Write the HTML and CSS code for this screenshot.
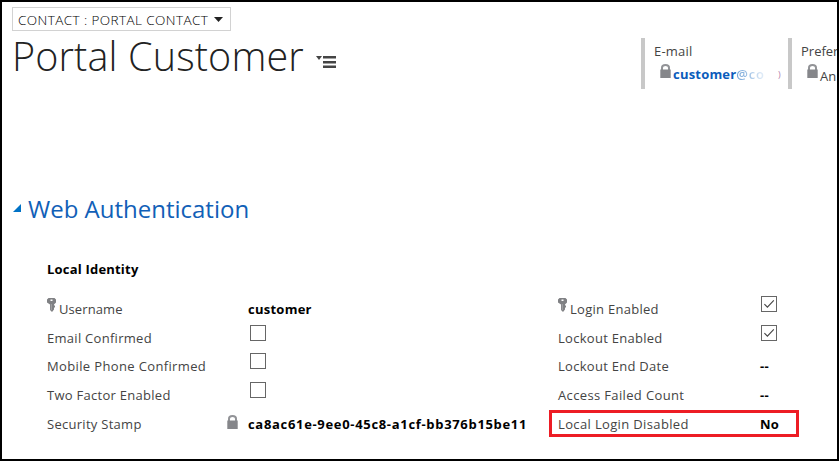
FILE: index.html
```
<!DOCTYPE html>
<html lang="en">
<head>
<meta charset="utf-8">
<title>Portal Customer</title>
<link rel="stylesheet" href="styles.css">
</head>
<body>
<svg class="symbols" aria-hidden="true">
  <symbol id="lock" viewBox="0 0 11 14"><path d="M2 7V3.7Q2 1 5.5 1T9 3.7V7" fill="none" stroke="#929397" stroke-width="2"/><path d="M0.3 5.5h10.4V14H.3z" fill="#85868a"/></symbol>
  <symbol id="key" viewBox="0 0 9 14"><path fill-rule="evenodd" d="M1.5 0h6L9 1.5v3L7 6.5v1h1v2H7v2L5 14 3 12V6.5L0 4.5v-3zM3.5 1.5v1.6h2V1.5z" fill="#808184"/><path d="M4.3 6v6" stroke="#b5b6b8" stroke-width=".7"/></symbol>
  <symbol id="check" viewBox="0 0 14 14"><path d="M2.4 7.2 5.4 10.2 11.8 3.4" fill="none" stroke="#444" stroke-width="1.1"/></symbol>
</svg>
<div class="page">
  <header class="header">
    <div class="heading">
      <div class="form-picker"><span>CONTACT : PORTAL CONTACT</span><svg class="caret" viewBox="0 0 9 5"><path d="M0 0h9L4.5 5z"/></svg></div>
      <div class="title-row">
        <h1 class="title">Portal Customer</h1>
        <svg class="menu" viewBox="0 0 20 13"><path d="M0 0h6L3 4zM7 0h13v2.4H7zM7 5h13v2.4H7zM7 9.6h13V12H7z"/></svg>
      </div>
    </div>
    <div class="summary email">
      <div class="summary-label">E-mail</div>
      <div class="summary-value"><svg class="lock"><use href="#lock"/></svg><span class="address">customer<span class="domain">@co</span></span><span class="remnant">)</span></div>
    </div>
    <div class="summary preferred">
      <div class="summary-label">Prefer</div>
      <div class="summary-value"><svg class="lock"><use href="#lock"/></svg><span class="plain">An</span></div>
    </div>
  </header>
  <h2 class="section"><svg class="twisty" viewBox="0 0 8 8"><path d="M8 0v8H0z"/></svg><span>Web Authentication</span></h2>
  <h3 class="group">Local Identity</h3>
  <div class="columns">
    <div class="col left">
      <div class="row"><div class="label user"><svg class="key"><use href="#key"/></svg><span>Username</span></div><div class="value">customer</div></div>
      <div class="row"><div class="label">Email Confirmed</div><div class="box"></div></div>
      <div class="row"><div class="label wide">Mobile Phone Confirmed</div><div class="box"></div></div>
      <div class="row"><div class="label">Two Factor Enabled</div><div class="box"></div></div>
      <div class="row"><div class="label stamp"><span>Security Stamp</span><svg class="lock"><use href="#lock"/></svg></div><div class="value guid">ca8ac61e-9ee0-45c8-a1cf-bb376b15be11</div></div>
    </div>
    <div class="col right">
      <div class="row"><div class="label"><svg class="key"><use href="#key"/></svg><span>Login Enabled</span></div><div class="box"><svg><use href="#check"/></svg></div></div>
      <div class="row"><div class="label">Lockout Enabled</div><div class="box"><svg><use href="#check"/></svg></div></div>
      <div class="row"><div class="label">Lockout End Date</div><div class="value">--</div></div>
      <div class="row"><div class="label wide">Access Failed Count</div><div class="value">--</div></div>
      <div class="row marked"><div class="label wide">Local Login Disabled</div><div class="value">No</div></div>
    </div>
  </div>
</div>
</body>
</html>
```
FILE: styles.css
```
* { box-sizing: border-box; }
body { margin: 0; font-family: "Open Sans", "Noto Sans", sans-serif; font-size: 13px; color: #444; background: #fff; }
h1, h2, h3 { margin: 0; font-weight: 400; }
svg { display: block; flex: none; }
.symbols { position: absolute; width: 0; height: 0; }
.page { width: 839px; height: 461px; border: 2px solid #000; overflow: hidden; white-space: nowrap; }
.header { display: flex; height: 182px; }
.heading { width: 639px; padding: 5px 0 0 10px; flex: none; }
.form-picker { width: 219px; height: 24px; border: 1px solid #d2d2d2; padding-left: 5px; display: flex; align-items: center; color: #000; font-size: 13.5px; font-weight: 300; letter-spacing: .42px; }
.form-picker span { width: 196px; padding-top: 2px; }
.caret { width: 9px; height: 5px; fill: #222; }
.title-row { display: flex; }
.title { width: 304px; font-size: 39.5px; font-weight: 300; line-height: 50px; color: #222; letter-spacing: .15px; }
.menu { width: 20px; height: 13px; margin-top: 25px; fill: #444; }
.summary { flex: none; width: 147px; height: 51px; margin-top: 36px; border-left: 4px solid #c8c8c8; padding-left: 9px; letter-spacing: .2px; }
.preferred { width: 49px; letter-spacing: 0; }
.summary-label { height: 25px; line-height: 27px; }
.summary-value { display: flex; height: 25px; padding-left: 6px; line-height: 23px; }
.summary-value .lock { margin: 1px 2px 0 0; }
.lock { width: 11px; height: 14px; }
.address { width: 105px; font-weight: 700; color: #0b5cbb; }
.domain { color: transparent; font-weight: 600; background: linear-gradient(90deg, #6da0d6, #e8f1fa); background-clip: text; letter-spacing: .8px; }
.remnant { font-size: 9px; color: #b07cab; line-height: 24px; }
.plain { line-height: 26px; }
.section { display: flex; align-items: center; height: 48px; padding-left: 11px; font-size: 24px; color: #1160b7; }
.twisty { width: 8px; height: 8px; margin-right: 7px; fill: #0072c6; }
.group { margin: 25px 0 0 45px; height: 24px; line-height: 24px; font-size: 13px; font-weight: 700; color: #000; letter-spacing: .2px; }
.columns { display: flex; padding-top: 14px; }
.col { flex: none; display: grid; grid-template-rows: 29px 28px 29px 29px 29px; }
.left { width: 502px; padding-left: 45px; }
.right { width: 250px; margin-left: 45px; }
.row { display: flex; align-items: center; height: 27px; }
.label { width: 201px; display: flex; align-items: center; letter-spacing: .28px; }
.user { letter-spacing: .1px; }
.wide { letter-spacing: .36px; }
.value { color: #000; font-weight: 700; letter-spacing: .25px; }
.guid { letter-spacing: .68px; }
.key { width: 9px; height: 14px; margin: -8px 3px 0 0; }
.stamp { justify-content: space-between; padding-right: 10px; }
.stamp .lock { margin-top: -4px; }
.box { width: 16px; height: 16px; border: 1px solid #666; margin: -10px 0 0 2px; display: flex; }
.box svg { width: 14px; height: 14px; }
.right .row { padding-left: 9px; }
.right .label { width: 202px; }
.right .box { margin-left: 1px; }
.right .marked { border: 3px solid #ed1c24; padding-left: 6px; }
```
